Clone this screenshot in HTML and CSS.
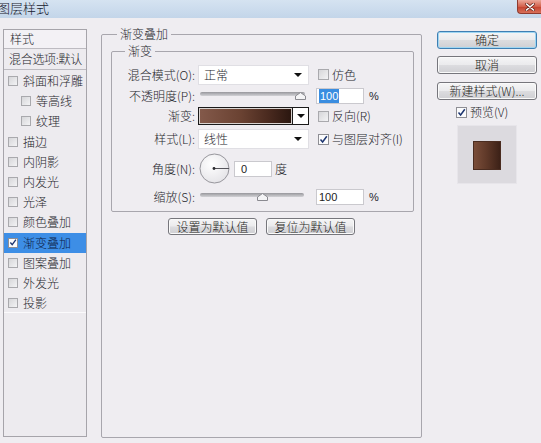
FILE: index.html
```html
<!DOCTYPE html>
<html lang="zh">
<head>
<meta charset="utf-8">
<title>图层样式</title>
<link rel="stylesheet" href="styles.css">
</head>
<body>
<div class="titlebar">
  <span class="title">图层样式</span>
  <span class="close"><svg width="10" height="8" viewBox="0 0 10 8"><path d="M1.5 1 L8.5 7 M8.5 1 L1.5 7" stroke="#6d2a20" stroke-width="3" stroke-linecap="round"/><path d="M1.5 1 L8.5 7 M8.5 1 L1.5 7" stroke="#fff" stroke-width="1.6" stroke-linecap="round"/></svg></span>
</div>
<div class="main">
  <aside class="styles-panel">
    <div class="panel-head">样式</div>
    <div class="panel-blend">混合选项:默认</div>
    <ul class="style-list">
      <li><span class="cb"></span>斜面和浮雕</li>
      <li class="sub"><span class="cb"></span>等高线</li>
      <li class="sub"><span class="cb"></span>纹理</li>
      <li><span class="cb"></span>描边</li>
      <li><span class="cb"></span>内阴影</li>
      <li><span class="cb"></span>内发光</li>
      <li><span class="cb"></span>光泽</li>
      <li><span class="cb"></span>颜色叠加</li>
      <li class="selected"><span class="cb checked"><svg width="9" height="9" viewBox="0 0 9 9"><path d="M1.5 4.5 L3.6 7 L7.8 1.2" fill="none" stroke="#1d3570" stroke-width="1.5"/></svg></span>渐变叠加</li>
      <li><span class="cb"></span>图案叠加</li>
      <li><span class="cb"></span>外发光</li>
      <li class="last"><span class="cb"></span>投影</li>
    </ul>
  </aside>

  <fieldset class="group outer">
    <legend>渐变叠加</legend>
    <fieldset class="group inner">
      <legend>渐变</legend>
      <div class="row r1">
        <span class="lbl">混合模式(O):</span>
        <div class="ctl"><div class="select"><span>正常</span><span class="caret"></span></div></div>
        <label class="extra"><span class="cb"></span>仿色</label>
      </div>
      <div class="row r2">
        <span class="lbl">不透明度(P):</span>
        <div class="ctl slider"><span class="track"></span><svg class="thumb thumb-opacity" width="11" height="8" viewBox="0 0 11 8"><path d="M0.5 7.5 L0.5 4 L5.5 0.5 L10.5 4 L10.5 7.5 Z" fill="#f4f4f6" stroke="#8a8a90"/></svg></div>
        <div class="extra"><span class="num"><span class="sel">100</span></span><span class="pct">%</span></div>
      </div>
      <div class="row r3">
        <span class="lbl">渐变:</span>
        <div class="ctl"><div class="gradient"><span class="fill"></span><span class="drop"><span class="caret"></span></span></div></div>
        <label class="extra"><span class="cb"></span>反向(R)</label>
      </div>
      <div class="row r4">
        <span class="lbl">样式(L):</span>
        <div class="ctl"><div class="select"><span>线性</span><span class="caret"></span></div></div>
        <label class="extra"><span class="cb checked"><svg width="9" height="9" viewBox="0 0 9 9"><path d="M1.5 4.5 L3.6 7 L7.8 1.2" fill="none" stroke="#1d3570" stroke-width="1.5"/></svg></span>与图层对齐(I)</label>
      </div>
      <div class="row r5">
        <span class="lbl">角度(N):</span>
        <div class="ctl">
          <svg class="dial" width="31" height="31" viewBox="0 0 31 31"><defs><radialGradient id="dg" cx="0.4" cy="0.35" r="0.7"><stop offset="0" stop-color="#ffffff"/><stop offset="1" stop-color="#e4e3e7"/></radialGradient></defs><circle cx="15.5" cy="15.5" r="14.5" fill="url(#dg)" stroke="#97969c"/><line x1="15.5" y1="15.5" x2="30" y2="15.5" stroke="#55545a" stroke-width="1"/><circle cx="15" cy="15.5" r="1.4" fill="#2a2a2e"/></svg>
          <span class="num angle">0</span><span class="deg">度</span>
        </div>
      </div>
      <div class="row r6">
        <span class="lbl">缩放(S):</span>
        <div class="ctl slider"><span class="track short"></span><svg class="thumb thumb-scale" width="11" height="8" viewBox="0 0 11 8"><path d="M0.5 7.5 L0.5 4 L5.5 0.5 L10.5 4 L10.5 7.5 Z" fill="#f4f4f6" stroke="#8a8a90"/></svg></div>
        <div class="extra"><span class="num">100</span><span class="pct">%</span></div>
      </div>
    </fieldset>
    <div class="defaults">
      <button class="btn small">设置为默认值</button>
      <button class="btn small">复位为默认值</button>
    </div>
  </fieldset>

  <div class="actions">
    <button class="btn wide default">确定</button>
    <button class="btn wide cancel">取消</button>
    <button class="btn wide newstyle">新建样式(W)...</button>
    <label class="preview-toggle"><span class="cb checked"><svg width="9" height="9" viewBox="0 0 9 9"><path d="M1.5 4.5 L3.6 7 L7.8 1.2" fill="none" stroke="#1d3570" stroke-width="1.5"/></svg></span>预览(V)</label>
    <div class="preview-box"><span class="swatch"></span></div>
  </div>
</div>
</body>
</html>
```

FILE: styles.css
```css
* { box-sizing: border-box; }
html, body { margin: 0; padding: 0; }
body {
  width: 541px;
  height: 443px;
  overflow: hidden;
  background: #efedf1;
  font-family: "Noto Sans CJK SC", "Microsoft YaHei", sans-serif;
  font-size: 12px;
  font-weight: 300;
  line-height: 16px;
  color: #26262c;
}

/* title bar */
.titlebar {
  height: 18px;
  background: linear-gradient(#d5e3f1, #c3d5e9);
  display: flex;
  justify-content: space-between;
  align-items: flex-start;
}
.title {
  margin-left: -3px;
  font-size: 13px;
  line-height: 16px;
  color: #17202e;
}
.close {
  width: 24px;
  height: 14px;
  background: linear-gradient(#eba99b, #d3614c 50%, #c3412d 51%, #d8705a);
  border: 1px solid #8f3b2f;
  border-top: none;
  border-right: none;
  border-radius: 0 0 0 4px;
  display: flex;
  align-items: center;
  justify-content: center;
}

.main {
  display: flex;
  align-items: flex-start;
  padding-left: 3px;
}

/* left styles list */
.styles-panel {
  width: 84px;
  height: 408px;
  margin-top: 11px;
  border: 1px solid #a6a4aa;
  background: #edebef;
  flex: none;
}
.panel-head {
  height: 19px;
  padding-left: 6px;
  line-height: 18px;
  background: #f3f1f5;
  border-bottom: 1px solid #bdbbc1;
}
.panel-blend {
  height: 21px;
  padding-left: 5px;
  line-height: 20px;
  border-bottom: 1px solid #bdbbc1;
  white-space: nowrap;
  overflow: hidden;
  letter-spacing: -0.3px;
}
.style-list {
  list-style: none;
  margin: 0;
  padding: 1px 0 0 0;
}
.style-list li {
  height: 20.2px;
  display: flex;
  align-items: center;
  padding-left: 4px;
  white-space: nowrap;
}
.style-list li.sub { padding-left: 17px; }
.style-list li.last { border-bottom: 1px solid #fbfafc; }
.style-list li.selected {
  background: #3d8ee6;
  color: #0d1d45;
}

.cb {
  width: 10px;
  height: 10px;
  margin-right: 5px;
  border: 1px solid #a9a9ad;
  background: linear-gradient(135deg, #d6d6d9, #f3f3f5);
  flex: none;
  display: inline-flex;
  align-items: center;
  justify-content: center;
}
.cb.checked { background: #fbfbfc; border-color: #8e8e94; }
.cb svg { display: block; }

/* group boxes */
.group {
  margin: 0;
  padding: 0;
  min-width: 0;
  border: 1px solid #a8a6ad;
  border-radius: 2px;
}
.group legend {
  padding: 0 3px;
  margin-left: 15px;
  line-height: 16px;
}
.outer {
  width: 321px;
  height: 412px;
  margin: 8px 0 0 14px;
  flex: none;
}
.inner {
  width: 303px;
  height: 169px;
  margin: 1px 0 0 9px;
  padding-top: 5px;
}
.inner legend { margin-left: 13px; }

.row { display: flex; align-items: center; }
.r1 { height: 21px; }
.r2 { height: 17px; margin-top: 2px; }
.r3 { height: 18px; margin-top: 3px; }
.r4 { height: 22px; margin-top: 3px; }
.r5 { height: 33px; margin-top: 2px; }
.r6 { height: 17px; margin-top: 3px; }

.lbl {
  width: 83px;
  margin-right: 3px;
  text-align: right;
  flex: none;
  white-space: nowrap;
}
.ctl {
  width: 112px;
  height: 100%;
  flex: none;
  display: flex;
  align-items: center;
}
.extra {
  margin-left: 6px;
  display: flex;
  align-items: center;
  white-space: nowrap;
}
.extra .cb { margin-left: 2px; width: 11px; height: 11px; margin-right: 3px; }

.select {
  width: 111px;
  height: 20px;
  background: #fff;
  border: 1px solid #e0dfe4;
  display: flex;
  align-items: center;
  justify-content: space-between;
  padding: 0 6px 0 5px;
}
.caret {
  width: 0;
  height: 0;
  border-left: 4px solid transparent;
  border-right: 4px solid transparent;
  border-top: 4px solid #111;
}

/* sliders */
.slider { position: relative; }
.track {
  display: block;
  margin-left: 2px;
  margin-top: -4px;
  width: 105px;
  height: 4px;
  border-radius: 2px;
  background: linear-gradient(#97979c, #d2d2d6);
}
.track.short { width: 104px; margin-top: -3px; }
.thumb { position: absolute; }
.thumb-opacity { left: 97px; top: 5px; }
.thumb-scale { left: 59px; top: 5px; }

.num {
  display: inline-block;
  width: 48px;
  height: 16px;
  background: #fff;
  border: 1px solid #cac9ce;
  padding-left: 2px;
  font-family: "Liberation Sans", Arial, sans-serif;
  font-size: 11px;
  font-weight: 400;
  line-height: 14px;
  color: #222;
}
.num .sel {
  display: inline-block;
  background: #3a8de0;
  color: #fff;
  padding: 0 1px;
}
.pct {
  margin-left: 5px;
  font-family: "Liberation Sans", Arial, sans-serif;
  font-size: 11px;
  font-weight: 400;
}

/* gradient swatch */
.gradient {
  width: 111px;
  height: 18px;
  border: 1px solid #1a1a1a;
  display: flex;
}
.gradient .fill {
  flex: 1;
  border: 1px solid #d9d3d0;
  background: linear-gradient(90deg, #83594a, #6a4232 45%, #4a2a1f 75%, #2b1710);
}
.gradient .drop {
  width: 16px;
  background: #fff;
  border-left: 1px solid #1a1a1a;
  display: flex;
  align-items: center;
  justify-content: center;
}

/* angle */
.dial { margin-left: 1px; flex: none; }
.num.angle { width: 38px; margin-left: 4px; padding-left: 6px; }
.deg { margin-left: 3px; }

/* defaults buttons */
.defaults {
  display: flex;
  justify-content: center;
  gap: 9px;
  margin-top: 6px;
}
.btn {
  font-family: inherit;
  font-size: 12px;
  font-weight: 300;
  line-height: 14px;
  color: #1f1f24;
  padding: 0;
  border: 1px solid #76767c;
  border-radius: 3px;
  background: linear-gradient(#f5f5f6 0%, #ebebed 48%, #dcdcdf 52%, #cfcfd3 100%);
  box-shadow: inset 0 0 0 1px #fafafa;
  text-align: center;
}
.btn.small { width: 89px; height: 17px; }
.btn.wide { width: 100px; height: 18px; }
.btn.default {
  border-color: #3f7fb3;
  box-shadow: inset 0 0 0 1px #9fd6f2;
}

/* right column */
.actions {
  width: 100px;
  margin: 13px 0 0 15px;
  display: flex;
  flex-direction: column;
  flex: none;
}
.btn.cancel { margin-top: 7px; }
.btn.newstyle { margin-top: 8px; }
.preview-toggle {
  margin-top: 5px;
  height: 14px;
  padding-left: 19px;
  display: flex;
  align-items: center;
}
.preview-toggle .cb { width: 11px; height: 11px; margin-right: 3px; }
.preview-box {
  margin: 6px 0 0 20px;
  width: 60px;
  height: 59px;
  background: #dcdadf;
  border: 1px solid #e7e5ea;
  padding: 15px 0 0 15px;
}
.swatch {
  display: block;
  width: 28px;
  height: 29px;
  background: linear-gradient(90deg, #7a4d39, #5e3828 50%, #3c2117);
  border: 1px solid #4a2c20;
}
```
